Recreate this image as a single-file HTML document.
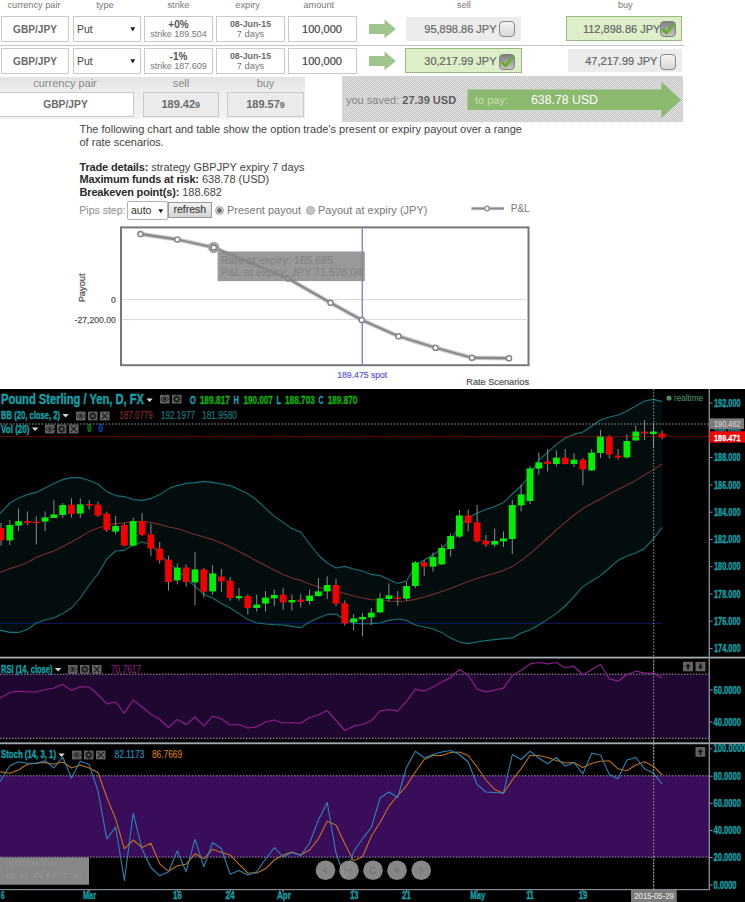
<!DOCTYPE html>
<html><head><meta charset="utf-8"><title>FX options</title>
<style>
html,body{margin:0;padding:0;background:#fff;}
body{width:745px;height:902px;overflow:hidden;position:relative;font-family:"Liberation Sans",Arial,sans-serif;color:#333;}
.a{position:absolute;white-space:nowrap;}
.c{position:absolute;white-space:nowrap;text-align:center;}
.hl{font-size:9.2px;color:#777;top:0.3px;line-height:11px;}
.bx{position:absolute;box-sizing:border-box;border:1px solid #c9c9c9;background:#fff;}
.t11{font-size:11px;color:#555;}
.gbox{position:absolute;background:#ececec;}
.grbox{position:absolute;box-sizing:border-box;background:#dcefc9;border:1px solid #9aba84;}
.amt{position:absolute;font-size:11px;color:#666;-webkit-text-stroke:0.2px #666;white-space:nowrap;text-align:right;}
.cb{position:absolute;box-sizing:border-box;width:16px;height:16px;border:1px solid #8a8a8a;border-radius:4px;background:linear-gradient(#f4f4f4,#d8d8d8);}
.cb.on{background:linear-gradient(#7e7e7e,#c4c4c4);border-color:#808080;}
.p{position:absolute;left:79.5px;font-size:11px;line-height:13px;color:#444;white-space:nowrap;}
.p b{color:#2a2a2a;letter-spacing:-0.16px;}
</style></head>
<body>
<div class="c hl" style="left:-6px;width:80px">currency pair</div>
<div class="c hl" style="left:65px;width:80px">type</div>
<div class="c hl" style="left:138.5px;width:80px">strike</div>
<div class="c hl" style="left:207.6px;width:80px">expiry</div>
<div class="c hl" style="left:278.75px;width:80px">amount</div>
<div class="c hl" style="left:424px;width:80px">sell</div>
<div class="c hl" style="left:585.3px;width:80px">buy</div>
<div class="bx" style="left:1px;top:16px;width:68px;height:26px"></div>
<div class="c" style="left:1px;width:68px;top:22.75px;font-size:10.1px;font-weight:bold;line-height:13px;color:#6a6a6a">GBP/JPY</div>
<div class="bx" style="left:72.5px;top:16px;width:68.5px;height:26px"></div>
<div class="a" style="left:77px;top:22.75px;font-size:10.5px;line-height:13px;color:#444">Put</div>
<svg class="a" style="left:129.5px;top:26.5px" width="6" height="5"><path d="M0.3 0.3H5.2L2.75 4.4Z" fill="#222"/></svg>
<div class="bx" style="left:144px;top:16px;width:68.5px;height:26px"></div>
<div class="c" style="left:144.5px;width:68px;top:18.5px;font-size:10px;line-height:11px;color:#555;font-weight:bold">+0%</div>
<div class="c" style="left:144.5px;width:68px;top:29px;font-size:9px;line-height:11px;color:#777">strike 189.504</div>
<div class="bx" style="left:216px;top:16px;width:69px;height:26px"></div>
<div class="c" style="left:216px;width:69px;top:18.5px;font-size:8.8px;font-weight:bold;line-height:11px;color:#6a6a6a">08-Jun-15</div>
<div class="c" style="left:216px;width:69px;top:29px;font-size:9.3px;line-height:11px;color:#777">7 days</div>
<div class="bx" style="left:287.5px;top:16px;width:69px;height:26px"></div>
<div class="c" style="left:287.5px;width:69px;top:23px;font-size:11px;line-height:13px;color:#444;-webkit-text-stroke:0.2px #444">100,000</div>
<svg class="a" style="left:368px;top:16px" width="30" height="26"><path d="M1 8.1 H16.5 V3.6 L27.8 13 L16.5 22.3 V17.9 H1 Z" fill="#a0c48e"/></svg>
<div class="gbox" style="left:406.25px;top:17px;width:115px;height:23.75px"></div>
<div class="amt" style="left:396px;width:100.5px;top:22.5px;line-height:13px">95,898.86 JPY</div>
<div class="cb" style="left:499px;top:21.25px"></div>
<div class="grbox" style="left:566.3px;top:16.3px;width:116px;height:25px"></div>
<div class="amt" style="left:560px;width:100.4px;top:22.5px;line-height:13px">112,898.86 JPY</div>
<div class="cb on" style="left:660px;top:21.25px"></div>
<svg class="a" style="left:660px;top:21.25px" width="16" height="16"><path d="M3.2 8.6 L6.6 12 L13 3.8" fill="none" stroke="#63b01e" stroke-width="2.6" stroke-linecap="round" stroke-linejoin="round"/></svg>
<div class="a" style="left:0;top:45px;width:683.5px;height:1px;background:#c4c4c4"></div>
<div class="bx" style="left:1px;top:48.4px;width:68px;height:26px"></div>
<div class="c" style="left:1px;width:68px;top:55.15px;font-size:10.1px;font-weight:bold;line-height:13px;color:#6a6a6a">GBP/JPY</div>
<div class="bx" style="left:72.5px;top:48.4px;width:68.5px;height:26px"></div>
<div class="a" style="left:77px;top:55.15px;font-size:10.5px;line-height:13px;color:#444">Put</div>
<svg class="a" style="left:129.5px;top:58.9px" width="6" height="5"><path d="M0.3 0.3H5.2L2.75 4.4Z" fill="#222"/></svg>
<div class="bx" style="left:144px;top:48.4px;width:68.5px;height:26px"></div>
<div class="c" style="left:144.5px;width:68px;top:50.9px;font-size:10px;line-height:11px;color:#555;font-weight:bold">-1%</div>
<div class="c" style="left:144.5px;width:68px;top:61.4px;font-size:9px;line-height:11px;color:#777">strike 187.609</div>
<div class="bx" style="left:216px;top:48.4px;width:69px;height:26px"></div>
<div class="c" style="left:216px;width:69px;top:50.9px;font-size:8.8px;font-weight:bold;line-height:11px;color:#6a6a6a">08-Jun-15</div>
<div class="c" style="left:216px;width:69px;top:61.4px;font-size:9.3px;line-height:11px;color:#777">7 days</div>
<div class="bx" style="left:287.5px;top:48.4px;width:69px;height:26px"></div>
<div class="c" style="left:287.5px;width:69px;top:55.4px;font-size:11px;line-height:13px;color:#444;-webkit-text-stroke:0.2px #444">100,000</div>
<svg class="a" style="left:368px;top:48.4px" width="30" height="26"><path d="M1 8.1 H16.5 V3.6 L27.8 13 L16.5 22.3 V17.9 H1 Z" fill="#a0c48e"/></svg>
<div class="grbox" style="left:405.25px;top:48.15px;width:116.75px;height:25px"></div>
<div class="amt" style="left:396px;width:100.5px;top:54.9px;line-height:13px">30,217.99 JPY</div>
<div class="cb on" style="left:499px;top:53.65px"></div>
<svg class="a" style="left:499px;top:53.65px" width="16" height="16"><path d="M3.2 8.6 L6.6 12 L13 3.8" fill="none" stroke="#63b01e" stroke-width="2.6" stroke-linecap="round" stroke-linejoin="round"/></svg>
<div class="gbox" style="left:567.5px;top:48.8px;width:114px;height:23.4px"></div>
<div class="amt" style="left:557px;width:100.4px;top:54.9px;line-height:13px">47,217.99 JPY</div>
<div class="cb" style="left:659.5px;top:53.65px"></div>
<div class="a" style="left:0;top:77px;width:305px;height:42px;background:linear-gradient(#e4e4e4,#eeeeee 40%,#f2f2f2)"></div>
<div class="c" style="left:15px;width:100px;top:77.2px;font-size:11px;line-height:13px;color:#888">currency pair</div>
<div class="c" style="left:131px;width:100px;top:77.2px;font-size:11px;line-height:13px;color:#888">sell</div>
<div class="c" style="left:215.5px;width:100px;top:77.2px;font-size:11px;line-height:13px;color:#888">buy</div>
<div class="bx" style="left:-1px;top:91.5px;width:135px;height:25px"></div>
<div class="c" style="left:0;width:131px;top:97.5px;font-size:10.3px;font-weight:bold;line-height:13px;color:#6a6a6a">GBP/JPY</div>
<div class="bx" style="left:143px;top:91.5px;width:75.5px;height:25px;background:#ebebeb"></div>
<div class="c" style="left:143px;width:75.5px;top:97.5px;font-size:11px;font-weight:bold;line-height:13px;color:#6a6a6a">189.42<span style="font-size:9px">9</span></div>
<div class="bx" style="left:227px;top:91.5px;width:77px;height:25px;background:#ebebeb"></div>
<div class="c" style="left:227px;width:77px;top:97.5px;font-size:11px;font-weight:bold;line-height:13px;color:#6a6a6a">189.57<span style="font-size:9px">9</span></div>
<div class="a" style="left:342px;top:76px;width:341px;height:45.5px;background:repeating-conic-gradient(#c8c8c8 0 25%,#e0e0e0 0 50%) 0 0/2px 2px"></div>
<div class="a" style="left:346px;top:93.5px;font-size:11px;line-height:13px;color:#858585">you saved: <b style="color:#5e5e5e">27.39 USD</b></div>
<svg class="a" style="left:460px;top:78px" width="225" height="44"><path d="M7.5 11.5 H201.4 V3.6 L221 22 L201.4 40 V32 H7.5 Z" fill="#8db96f"/></svg>
<div class="a" style="left:475px;top:93.5px;font-size:11px;line-height:13px;color:#c4e0ad">to pay:</div>
<div class="a" style="left:531px;top:92.5px;font-size:12.3px;line-height:14px;color:#fff">638.78 USD</div>
<div class="p" style="top:122.5px">The following chart and table show the option trade's present or expiry payout over a range</div>
<div class="p" style="top:135.5px">of rate scenarios.</div>
<div class="p" style="top:161px"><b>Trade details:</b> strategy GBPJPY expiry 7 days</div>
<div class="p" style="top:173.3px"><b>Maximum funds at risk:</b> 638.78 (USD)</div>
<div class="p" style="top:186px"><b>Breakeven point(s):</b> 188.682</div>
<div class="a" style="left:79.3px;top:204px;font-size:10.5px;line-height:13px;color:#8a8a8a">Pips step:</div>
<div class="bx" style="left:126.5px;top:200.5px;width:41.3px;height:19px;border-color:#b4b4b4;border-radius:2px;box-shadow:0 0 1px #ccc"></div>
<div class="a" style="left:131px;top:204px;font-size:10.5px;line-height:13px;color:#333">auto</div>
<svg class="a" style="left:157.5px;top:208.5px" width="6" height="5"><path d="M0.3 0.3H5.2L2.75 4.2Z" fill="#222"/></svg>
<div class="bx" style="left:168px;top:202.25px;width:43.5px;height:15.5px;border-color:#999;background:linear-gradient(#f2f2f2,#d4d4d4)"></div>
<div class="c" style="left:168px;width:43.5px;top:202.5px;font-size:10.5px;line-height:13px;color:#444;-webkit-text-stroke:0.2px #444">refresh</div>
<div class="a" style="left:215.3px;top:205.5px;width:9px;height:9px;box-sizing:border-box;border-radius:50%;border:1px solid #a0a0a0;background:radial-gradient(circle,#6a6a6a 0 1.9px,#d4d4d4 2.6px)"></div>
<div class="a" style="left:227px;top:204px;font-size:11px;line-height:13px;color:#777">Present payout</div>
<div class="a" style="left:306px;top:206px;width:8.75px;height:8.75px;box-sizing:border-box;border-radius:50%;border:1px solid #aaa;background:#c4c4c4"></div>
<div class="a" style="left:318px;top:204px;font-size:11px;line-height:13px;color:#777">Payout at expiry (JPY)</div>
<svg class="a" style="left:468px;top:203px" width="40" height="12"><line x1="3.5" y1="5.5" x2="36" y2="5.5" stroke="#d4d4d4" stroke-width="3.6"/><line x1="3.5" y1="5.5" x2="36" y2="5.5" stroke="#8c8c8c" stroke-width="2"/><circle cx="19" cy="5.5" r="2.3" fill="#fff" stroke="#8c8c8c" stroke-width="1.3"/></svg>
<div class="a" style="left:510.75px;top:202.5px;font-size:10px;line-height:12px;color:#777">P&amp;L</div>
<svg class="a" style="left:0;top:220px" width="745" height="169" viewBox="0 220 745 169" font-family="Liberation Sans,Arial,sans-serif">
<rect x="121" y="227.4" width="407.5" height="137.8" fill="#fff" stroke="#777" stroke-width="2"/>
<line x1="122" y1="299.5" x2="527.5" y2="299.5" stroke="#d9d9d9" stroke-width="1"/>
<line x1="122" y1="319.5" x2="527.5" y2="319.5" stroke="#d9d9d9" stroke-width="1"/>
<line x1="362.25" y1="228.4" x2="362.25" y2="364.2" stroke="#6a6af0" stroke-width="1.2"/>
<polyline points="140.5,234 177.3,239.5 213.75,247.5 288,278.5 330.5,302.75 361.75,320 398.5,336.25 435.5,347.75 472,357.75 509,358.25" fill="none" stroke="#cfcfcf" stroke-width="4.6" stroke-linejoin="round"/>
<polyline points="140.5,234 177.3,239.5 213.75,247.5 288,278.5 330.5,302.75 361.75,320 398.5,336.25 435.5,347.75 472,357.75 509,358.25" fill="none" stroke="#8a8a8a" stroke-width="2.3" stroke-linejoin="round"/>
<circle cx="213.75" cy="247.5" r="5.7" fill="#9c9c9c" opacity="0.9"/>
<circle cx="140.5" cy="234" r="2.6" fill="#fff" stroke="#858585" stroke-width="1.5"/>
<circle cx="177.3" cy="239.5" r="2.6" fill="#fff" stroke="#858585" stroke-width="1.5"/>
<circle cx="213.75" cy="247.5" r="2.6" fill="#fff" stroke="#858585" stroke-width="1.5"/>
<circle cx="288" cy="278.5" r="2.6" fill="#fff" stroke="#858585" stroke-width="1.5"/>
<circle cx="330.5" cy="302.75" r="2.6" fill="#fff" stroke="#858585" stroke-width="1.5"/>
<circle cx="361.75" cy="320" r="2.6" fill="#fff" stroke="#858585" stroke-width="1.5"/>
<circle cx="398.5" cy="336.25" r="2.6" fill="#fff" stroke="#858585" stroke-width="1.5"/>
<circle cx="435.5" cy="347.75" r="2.6" fill="#fff" stroke="#858585" stroke-width="1.5"/>
<circle cx="472" cy="357.75" r="2.6" fill="#fff" stroke="#858585" stroke-width="1.5"/>
<circle cx="509" cy="358.25" r="2.6" fill="#fff" stroke="#858585" stroke-width="1.5"/>
<rect x="217.6" y="251.5" width="147.2" height="29.6" fill="#888888" opacity="0.86"/>
<text x="220.75" y="264" font-size="10.9" fill="#838383">Rate at expiry: 185.685</text>
<text x="220.75" y="276.3" font-size="10.9" fill="#838383">P&amp;L at expiry: JPY 71,528.04</text>
<text x="111" y="302.7" font-size="9.5" fill="#555" stroke="#555" stroke-width="0.25" textLength="4.9" lengthAdjust="spacingAndGlyphs">0</text>
<text x="74.6" y="322.8" font-size="9.5" fill="#555" stroke="#555" stroke-width="0.25" textLength="41.2" lengthAdjust="spacingAndGlyphs">-27,200.00</text>
<text transform="translate(84.8,302.3) rotate(-90)" font-size="9.6" fill="#555" stroke="#555" stroke-width="0.25" textLength="28.8" lengthAdjust="spacingAndGlyphs">Payout</text>
<text x="337.25" y="377.9" font-size="9.4" fill="#5a5ae0" stroke="#5a5ae0" stroke-width="0.2" textLength="50" lengthAdjust="spacingAndGlyphs">189.475 spot</text>
<text x="466.25" y="385.4" font-size="9.6" fill="#555" stroke="#555" stroke-width="0.2" textLength="62.75" lengthAdjust="spacingAndGlyphs">Rate Scenarios</text>
</svg>
<svg class="a" style="left:0;top:389px" width="745" height="513" viewBox="0 389 745 513" font-family="Liberation Sans,Arial,sans-serif">
<rect x="0" y="389" width="745" height="513" fill="#000"/>
<polygon points="-2.0,515.4 1.0,512.4 9.8,503.0 18.6,498.0 27.4,494.4 36.3,492.4 45.1,488.0 53.9,483.6 62.7,479.6 71.5,477.6 80.3,477.6 89.2,480.4 98.0,484.0 106.8,491.6 115.6,495.6 124.4,496.6 133.2,499.6 142.1,500.4 150.9,498.4 159.7,494.6 168.5,488.6 177.3,485.6 186.1,483.4 195.0,482.6 203.8,481.4 212.6,482.4 221.4,484.0 230.2,485.6 239.0,489.6 247.8,493.6 256.7,500.0 265.5,508.4 274.3,516.4 283.1,522.4 291.9,528.6 300.7,532.0 309.6,544.0 318.4,555.0 327.2,563.0 336.0,568.0 344.8,566.4 353.6,569.0 362.5,571.0 371.3,574.4 380.1,575.6 388.9,579.6 397.7,583.4 406.5,581.0 415.4,565.6 424.2,560.0 433.0,555.0 441.8,548.4 450.6,540.0 459.4,526.0 468.2,518.0 477.1,513.0 485.9,509.6 494.7,506.4 503.5,502.4 512.3,494.0 521.1,486.0 530.0,475.0 538.8,460.0 547.6,452.4 556.4,444.4 565.2,438.0 574.0,434.4 582.9,432.0 591.7,426.0 600.5,420.0 609.3,417.0 618.1,415.0 626.9,411.0 635.8,406.0 644.6,401.0 653.4,399.4 662.2,401.6 662.2,527.4 653.4,539.0 644.6,548.4 635.8,553.0 626.9,556.0 618.1,560.4 609.3,568.0 600.5,575.6 591.7,581.0 582.9,586.6 574.0,596.6 565.2,606.0 556.4,613.4 547.6,619.4 538.8,625.0 530.0,630.0 521.1,633.0 512.3,637.9 503.5,638.6 494.7,639.6 485.9,640.6 477.1,642.0 468.2,643.6 459.4,642.0 450.6,638.0 441.8,632.4 433.0,629.0 424.2,627.0 415.4,625.0 406.5,620.4 397.7,619.0 388.9,620.4 380.1,623.0 371.3,623.6 362.5,624.0 353.6,623.0 344.8,620.0 336.0,614.0 327.2,614.4 318.4,618.0 309.6,622.0 300.7,627.6 291.9,626.4 283.1,625.0 274.3,624.6 265.5,624.0 256.7,623.0 247.8,619.6 239.0,613.6 230.2,608.0 221.4,603.6 212.6,598.0 203.8,594.4 195.0,586.4 186.1,578.4 177.3,570.0 168.5,562.6 159.7,554.0 150.9,544.4 142.1,542.0 133.2,545.0 124.4,550.4 115.6,551.0 106.8,559.0 98.0,574.0 89.2,585.0 80.3,598.0 71.5,608.0 62.7,613.6 53.9,618.0 45.1,620.0 36.3,623.0 27.4,629.6 18.6,632.4 9.8,632.4 1.0,630.4 -2.0,629.9" fill="#030d0e"/>
<line x1="0" y1="623.3" x2="662" y2="623.3" stroke="#0e1652" stroke-width="1.2"/>
<polyline points="-2,515.4 1.0,512.4 9.8,503.0 18.6,498.0 27.4,494.4 36.3,492.4 45.1,488.0 53.9,483.6 62.7,479.6 71.5,477.6 80.3,477.6 89.2,480.4 98.0,484.0 106.8,491.6 115.6,495.6 124.4,496.6 133.2,499.6 142.1,500.4 150.9,498.4 159.7,494.6 168.5,488.6 177.3,485.6 186.1,483.4 195.0,482.6 203.8,481.4 212.6,482.4 221.4,484.0 230.2,485.6 239.0,489.6 247.8,493.6 256.7,500.0 265.5,508.4 274.3,516.4 283.1,522.4 291.9,528.6 300.7,532.0 309.6,544.0 318.4,555.0 327.2,563.0 336.0,568.0 344.8,566.4 353.6,569.0 362.5,571.0 371.3,574.4 380.1,575.6 388.9,579.6 397.7,583.4 406.5,581.0 415.4,565.6 424.2,560.0 433.0,555.0 441.8,548.4 450.6,540.0 459.4,526.0 468.2,518.0 477.1,513.0 485.9,509.6 494.7,506.4 503.5,502.4 512.3,494.0 521.1,486.0 530.0,475.0 538.8,460.0 547.6,452.4 556.4,444.4 565.2,438.0 574.0,434.4 582.9,432.0 591.7,426.0 600.5,420.0 609.3,417.0 618.1,415.0 626.9,411.0 635.8,406.0 644.6,401.0 653.4,399.4 662.2,401.6" fill="none" stroke="#15727a" stroke-width="1.1" stroke-linejoin="round"/>
<polyline points="-2,629.9 1.0,630.4 9.8,632.4 18.6,632.4 27.4,629.6 36.3,623.0 45.1,620.0 53.9,618.0 62.7,613.6 71.5,608.0 80.3,598.0 89.2,585.0 98.0,574.0 106.8,559.0 115.6,551.0 124.4,550.4 133.2,545.0 142.1,542.0 150.9,544.4 159.7,554.0 168.5,562.6 177.3,570.0 186.1,578.4 195.0,586.4 203.8,594.4 212.6,598.0 221.4,603.6 230.2,608.0 239.0,613.6 247.8,619.6 256.7,623.0 265.5,624.0 274.3,624.6 283.1,625.0 291.9,626.4 300.7,627.6 309.6,622.0 318.4,618.0 327.2,614.4 336.0,614.0 344.8,620.0 353.6,623.0 362.5,624.0 371.3,623.6 380.1,623.0 388.9,620.4 397.7,619.0 406.5,620.4 415.4,625.0 424.2,627.0 433.0,629.0 441.8,632.4 450.6,638.0 459.4,642.0 468.2,643.6 477.1,642.0 485.9,640.6 494.7,639.6 503.5,638.6 512.3,637.9 521.1,633.0 530.0,630.0 538.8,625.0 547.6,619.4 556.4,613.4 565.2,606.0 574.0,596.6 582.9,586.6 591.7,581.0 600.5,575.6 609.3,568.0 618.1,560.4 626.9,556.0 635.8,553.0 644.6,548.4 653.4,539.0 662.2,527.4" fill="none" stroke="#15727a" stroke-width="1.1" stroke-linejoin="round"/>
<polyline points="-2,573.0 1.0,572.0 9.8,568.6 18.6,566.0 27.4,562.4 36.3,557.6 45.1,554.0 53.9,551.0 62.7,546.4 71.5,542.0 80.3,537.0 89.2,531.6 98.0,528.0 106.8,525.6 115.6,523.6 124.4,523.0 133.2,521.6 142.1,521.6 150.9,522.4 159.7,524.4 168.5,527.0 177.3,528.6 186.1,531.6 195.0,534.4 203.8,537.0 212.6,539.6 221.4,543.0 230.2,547.0 239.0,551.6 247.8,556.0 256.7,561.0 265.5,565.6 274.3,570.0 283.1,574.4 291.9,578.0 300.7,580.4 309.6,584.0 318.4,587.0 327.2,589.4 336.0,591.0 344.8,593.6 353.6,596.0 362.5,598.0 371.3,599.6 380.1,600.0 388.9,601.0 397.7,601.4 406.5,601.0 415.4,599.4 424.2,597.0 433.0,594.4 441.8,591.6 450.6,588.6 459.4,585.0 468.2,581.4 477.1,578.4 485.9,575.8 494.7,573.2 503.5,570.6 512.3,566.4 521.1,560.6 530.0,553.6 538.8,546.0 547.6,538.0 556.4,530.0 565.2,522.4 574.0,515.0 582.9,508.6 591.7,503.6 600.5,499.0 609.3,494.0 618.1,489.6 626.9,485.0 635.8,480.4 644.6,475.0 653.4,469.6 662.2,464.0" fill="none" stroke="#782e2e" stroke-width="1.1" stroke-linejoin="round"/>
<line x1="1.0" y1="523.0" x2="1.0" y2="545.6" stroke="#8a8a8a" stroke-width="1"/>
<rect x="-2.4" y="528.0" width="6.8" height="12.4" fill="#f40000"/>
<line x1="9.8" y1="520.0" x2="9.8" y2="545.0" stroke="#8a8a8a" stroke-width="1"/>
<rect x="6.4" y="525.0" width="6.8" height="15.4" fill="#00f000"/>
<line x1="18.6" y1="508.4" x2="18.6" y2="531.0" stroke="#8a8a8a" stroke-width="1"/>
<rect x="15.2" y="521.2" width="6.8" height="4.4" fill="#00f000"/>
<line x1="27.4" y1="511.4" x2="27.4" y2="525.0" stroke="#8a8a8a" stroke-width="1"/>
<rect x="24.0" y="521.2" width="6.8" height="1.8" fill="#f40000"/>
<line x1="36.3" y1="516.4" x2="36.3" y2="544.4" stroke="#8a8a8a" stroke-width="1"/>
<rect x="32.9" y="521.6" width="6.8" height="1.6" fill="#f40000"/>
<line x1="45.1" y1="511.4" x2="45.1" y2="531.0" stroke="#8a8a8a" stroke-width="1"/>
<rect x="41.7" y="517.4" width="6.8" height="4.2" fill="#00f000"/>
<line x1="53.9" y1="500.0" x2="53.9" y2="518.0" stroke="#8a8a8a" stroke-width="1"/>
<rect x="50.5" y="514.4" width="6.8" height="3.6" fill="#00f000"/>
<line x1="62.7" y1="503.0" x2="62.7" y2="518.0" stroke="#8a8a8a" stroke-width="1"/>
<rect x="59.3" y="505.0" width="6.8" height="10.0" fill="#00f000"/>
<line x1="71.5" y1="498.4" x2="71.5" y2="517.6" stroke="#8a8a8a" stroke-width="1"/>
<rect x="68.1" y="504.6" width="6.8" height="9.4" fill="#f40000"/>
<line x1="80.3" y1="498.4" x2="80.3" y2="518.0" stroke="#8a8a8a" stroke-width="1"/>
<rect x="76.9" y="504.4" width="6.8" height="9.2" fill="#00f000"/>
<line x1="89.2" y1="500.0" x2="89.2" y2="509.6" stroke="#8a8a8a" stroke-width="1"/>
<rect x="85.8" y="504.0" width="6.8" height="1.6" fill="#f40000"/>
<line x1="98.0" y1="501.6" x2="98.0" y2="517.0" stroke="#8a8a8a" stroke-width="1"/>
<rect x="94.6" y="504.6" width="6.8" height="11.0" fill="#f40000"/>
<line x1="106.8" y1="511.6" x2="106.8" y2="532.0" stroke="#8a8a8a" stroke-width="1"/>
<rect x="103.4" y="513.6" width="6.8" height="16.4" fill="#f40000"/>
<line x1="115.6" y1="516.0" x2="115.6" y2="534.0" stroke="#8a8a8a" stroke-width="1"/>
<rect x="112.2" y="526.0" width="6.8" height="5.6" fill="#00f000"/>
<line x1="124.4" y1="523.0" x2="124.4" y2="546.4" stroke="#8a8a8a" stroke-width="1"/>
<rect x="121.0" y="525.0" width="6.8" height="20.6" fill="#f40000"/>
<line x1="133.2" y1="517.6" x2="133.2" y2="546.4" stroke="#8a8a8a" stroke-width="1"/>
<rect x="129.8" y="521.2" width="6.8" height="24.4" fill="#00f000"/>
<line x1="142.1" y1="513.0" x2="142.1" y2="536.0" stroke="#8a8a8a" stroke-width="1"/>
<rect x="138.7" y="521.0" width="6.8" height="14.0" fill="#f40000"/>
<line x1="150.9" y1="523.6" x2="150.9" y2="556.0" stroke="#8a8a8a" stroke-width="1"/>
<rect x="147.5" y="534.4" width="6.8" height="14.2" fill="#f40000"/>
<line x1="159.7" y1="542.0" x2="159.7" y2="563.6" stroke="#8a8a8a" stroke-width="1"/>
<rect x="156.3" y="548.4" width="6.8" height="12.0" fill="#f40000"/>
<line x1="168.5" y1="556.0" x2="168.5" y2="590.6" stroke="#8a8a8a" stroke-width="1"/>
<rect x="165.1" y="559.6" width="6.8" height="22.4" fill="#f40000"/>
<line x1="177.3" y1="563.6" x2="177.3" y2="584.4" stroke="#8a8a8a" stroke-width="1"/>
<rect x="173.9" y="567.6" width="6.8" height="12.8" fill="#00f000"/>
<line x1="186.1" y1="564.4" x2="186.1" y2="586.6" stroke="#8a8a8a" stroke-width="1"/>
<rect x="182.7" y="567.4" width="6.8" height="14.6" fill="#f40000"/>
<line x1="195.0" y1="552.0" x2="195.0" y2="605.4" stroke="#8a8a8a" stroke-width="1"/>
<rect x="191.6" y="569.4" width="6.8" height="13.0" fill="#00f000"/>
<line x1="203.8" y1="568.0" x2="203.8" y2="597.6" stroke="#8a8a8a" stroke-width="1"/>
<rect x="200.4" y="569.4" width="6.8" height="22.2" fill="#f40000"/>
<line x1="212.6" y1="565.0" x2="212.6" y2="594.6" stroke="#8a8a8a" stroke-width="1"/>
<rect x="209.2" y="573.4" width="6.8" height="18.0" fill="#00f000"/>
<line x1="221.4" y1="569.0" x2="221.4" y2="592.0" stroke="#8a8a8a" stroke-width="1"/>
<rect x="218.0" y="576.6" width="6.8" height="4.8" fill="#f40000"/>
<line x1="230.2" y1="577.0" x2="230.2" y2="600.6" stroke="#8a8a8a" stroke-width="1"/>
<rect x="226.8" y="580.6" width="6.8" height="17.4" fill="#f40000"/>
<line x1="239.0" y1="588.0" x2="239.0" y2="600.6" stroke="#8a8a8a" stroke-width="1"/>
<rect x="235.6" y="596.2" width="6.8" height="2.0" fill="#00f000"/>
<line x1="247.8" y1="594.6" x2="247.8" y2="614.4" stroke="#8a8a8a" stroke-width="1"/>
<rect x="244.4" y="596.0" width="6.8" height="12.0" fill="#f40000"/>
<line x1="256.7" y1="594.6" x2="256.7" y2="611.6" stroke="#8a8a8a" stroke-width="1"/>
<rect x="253.3" y="604.6" width="6.8" height="3.4" fill="#00f000"/>
<line x1="265.5" y1="591.0" x2="265.5" y2="611.6" stroke="#8a8a8a" stroke-width="1"/>
<rect x="262.1" y="597.6" width="6.8" height="6.0" fill="#00f000"/>
<line x1="274.3" y1="589.6" x2="274.3" y2="606.0" stroke="#8a8a8a" stroke-width="1"/>
<rect x="270.9" y="595.0" width="6.8" height="3.4" fill="#00f000"/>
<line x1="283.1" y1="588.0" x2="283.1" y2="610.0" stroke="#8a8a8a" stroke-width="1"/>
<rect x="279.7" y="594.6" width="6.8" height="7.8" fill="#f40000"/>
<line x1="291.9" y1="594.6" x2="291.9" y2="610.6" stroke="#8a8a8a" stroke-width="1"/>
<rect x="288.5" y="600.0" width="6.8" height="2.4" fill="#00f000"/>
<line x1="300.7" y1="594.0" x2="300.7" y2="607.6" stroke="#8a8a8a" stroke-width="1"/>
<rect x="297.3" y="599.6" width="6.8" height="2.4" fill="#f40000"/>
<line x1="309.6" y1="589.6" x2="309.6" y2="604.6" stroke="#8a8a8a" stroke-width="1"/>
<rect x="306.2" y="595.6" width="6.8" height="5.4" fill="#00f000"/>
<line x1="318.4" y1="578.0" x2="318.4" y2="597.0" stroke="#8a8a8a" stroke-width="1"/>
<rect x="315.0" y="591.4" width="6.8" height="4.6" fill="#00f000"/>
<line x1="327.2" y1="576.4" x2="327.2" y2="599.0" stroke="#8a8a8a" stroke-width="1"/>
<rect x="323.8" y="585.0" width="6.8" height="6.4" fill="#00f000"/>
<line x1="336.0" y1="579.0" x2="336.0" y2="606.0" stroke="#8a8a8a" stroke-width="1"/>
<rect x="332.6" y="585.0" width="6.8" height="18.6" fill="#f40000"/>
<line x1="344.8" y1="600.4" x2="344.8" y2="625.6" stroke="#8a8a8a" stroke-width="1"/>
<rect x="341.4" y="603.4" width="6.8" height="20.0" fill="#f40000"/>
<line x1="353.6" y1="614.0" x2="353.6" y2="630.6" stroke="#8a8a8a" stroke-width="1"/>
<rect x="350.2" y="618.4" width="6.8" height="4.0" fill="#00f000"/>
<line x1="362.5" y1="613.0" x2="362.5" y2="636.4" stroke="#8a8a8a" stroke-width="1"/>
<rect x="359.1" y="617.0" width="6.8" height="2.4" fill="#00f000"/>
<line x1="371.3" y1="608.0" x2="371.3" y2="625.0" stroke="#8a8a8a" stroke-width="1"/>
<rect x="367.9" y="612.6" width="6.8" height="4.8" fill="#00f000"/>
<line x1="380.1" y1="593.0" x2="380.1" y2="613.0" stroke="#8a8a8a" stroke-width="1"/>
<rect x="376.7" y="598.4" width="6.8" height="14.0" fill="#00f000"/>
<line x1="388.9" y1="583.4" x2="388.9" y2="602.0" stroke="#8a8a8a" stroke-width="1"/>
<rect x="385.5" y="595.4" width="6.8" height="3.6" fill="#00f000"/>
<line x1="397.7" y1="591.0" x2="397.7" y2="605.6" stroke="#8a8a8a" stroke-width="1"/>
<rect x="394.3" y="597.4" width="6.8" height="1.6" fill="#f40000"/>
<line x1="406.5" y1="582.0" x2="406.5" y2="601.0" stroke="#8a8a8a" stroke-width="1"/>
<rect x="403.1" y="586.0" width="6.8" height="12.6" fill="#00f000"/>
<line x1="415.4" y1="561.0" x2="415.4" y2="588.0" stroke="#8a8a8a" stroke-width="1"/>
<rect x="412.0" y="562.4" width="6.8" height="23.6" fill="#00f000"/>
<line x1="424.2" y1="560.0" x2="424.2" y2="576.0" stroke="#8a8a8a" stroke-width="1"/>
<rect x="420.8" y="562.4" width="6.8" height="4.2" fill="#f40000"/>
<line x1="433.0" y1="552.4" x2="433.0" y2="571.6" stroke="#8a8a8a" stroke-width="1"/>
<rect x="429.6" y="557.0" width="6.8" height="9.6" fill="#00f000"/>
<line x1="441.8" y1="544.6" x2="441.8" y2="565.0" stroke="#8a8a8a" stroke-width="1"/>
<rect x="438.4" y="548.0" width="6.8" height="16.4" fill="#00f000"/>
<line x1="450.6" y1="533.6" x2="450.6" y2="556.6" stroke="#8a8a8a" stroke-width="1"/>
<rect x="447.2" y="536.0" width="6.8" height="13.0" fill="#00f000"/>
<line x1="459.4" y1="510.0" x2="459.4" y2="538.0" stroke="#8a8a8a" stroke-width="1"/>
<rect x="456.0" y="515.4" width="6.8" height="21.2" fill="#00f000"/>
<line x1="468.2" y1="509.6" x2="468.2" y2="531.4" stroke="#8a8a8a" stroke-width="1"/>
<rect x="464.8" y="515.4" width="6.8" height="7.6" fill="#f40000"/>
<line x1="477.1" y1="505.0" x2="477.1" y2="542.4" stroke="#8a8a8a" stroke-width="1"/>
<rect x="473.7" y="522.4" width="6.8" height="19.0" fill="#f40000"/>
<line x1="485.9" y1="535.0" x2="485.9" y2="547.0" stroke="#8a8a8a" stroke-width="1"/>
<rect x="482.5" y="540.6" width="6.8" height="4.0" fill="#f40000"/>
<line x1="494.7" y1="528.4" x2="494.7" y2="547.0" stroke="#8a8a8a" stroke-width="1"/>
<rect x="491.3" y="541.0" width="6.8" height="3.6" fill="#00f000"/>
<line x1="503.5" y1="531.4" x2="503.5" y2="547.0" stroke="#8a8a8a" stroke-width="1"/>
<rect x="500.1" y="538.4" width="6.8" height="3.0" fill="#00f000"/>
<line x1="512.3" y1="500.0" x2="512.3" y2="554.0" stroke="#8a8a8a" stroke-width="1"/>
<rect x="508.9" y="505.0" width="6.8" height="34.0" fill="#00f000"/>
<line x1="521.1" y1="484.4" x2="521.1" y2="511.4" stroke="#8a8a8a" stroke-width="1"/>
<rect x="517.7" y="494.4" width="6.8" height="11.0" fill="#00f000"/>
<line x1="530.0" y1="466.0" x2="530.0" y2="504.0" stroke="#8a8a8a" stroke-width="1"/>
<rect x="526.6" y="468.4" width="6.8" height="32.6" fill="#00f000"/>
<line x1="538.8" y1="452.4" x2="538.8" y2="474.6" stroke="#8a8a8a" stroke-width="1"/>
<rect x="535.4" y="462.4" width="6.8" height="6.2" fill="#00f000"/>
<line x1="547.6" y1="449.0" x2="547.6" y2="471.4" stroke="#8a8a8a" stroke-width="1"/>
<rect x="544.2" y="461.4" width="6.8" height="2.6" fill="#f40000"/>
<line x1="556.4" y1="450.4" x2="556.4" y2="466.4" stroke="#8a8a8a" stroke-width="1"/>
<rect x="553.0" y="457.6" width="6.8" height="6.4" fill="#00f000"/>
<line x1="565.2" y1="449.0" x2="565.2" y2="464.4" stroke="#8a8a8a" stroke-width="1"/>
<rect x="561.8" y="457.6" width="6.8" height="6.4" fill="#f40000"/>
<line x1="574.0" y1="453.0" x2="574.0" y2="467.0" stroke="#8a8a8a" stroke-width="1"/>
<rect x="570.6" y="459.6" width="6.8" height="4.4" fill="#00f000"/>
<line x1="582.9" y1="458.0" x2="582.9" y2="485.4" stroke="#8a8a8a" stroke-width="1"/>
<rect x="579.5" y="459.6" width="6.8" height="9.8" fill="#f40000"/>
<line x1="591.7" y1="449.0" x2="591.7" y2="471.0" stroke="#8a8a8a" stroke-width="1"/>
<rect x="588.3" y="452.6" width="6.8" height="17.8" fill="#00f000"/>
<line x1="600.5" y1="430.0" x2="600.5" y2="458.0" stroke="#8a8a8a" stroke-width="1"/>
<rect x="597.1" y="436.0" width="6.8" height="17.0" fill="#00f000"/>
<line x1="609.3" y1="435.0" x2="609.3" y2="458.4" stroke="#8a8a8a" stroke-width="1"/>
<rect x="605.9" y="436.6" width="6.8" height="18.0" fill="#f40000"/>
<line x1="618.1" y1="449.0" x2="618.1" y2="459.4" stroke="#8a8a8a" stroke-width="1"/>
<rect x="614.7" y="455.6" width="6.8" height="2.0" fill="#f40000"/>
<line x1="626.9" y1="434.4" x2="626.9" y2="458.4" stroke="#8a8a8a" stroke-width="1"/>
<rect x="623.5" y="441.0" width="6.8" height="16.4" fill="#00f000"/>
<line x1="635.8" y1="425.6" x2="635.8" y2="441.0" stroke="#8a8a8a" stroke-width="1"/>
<rect x="632.4" y="431.6" width="6.8" height="8.8" fill="#00f000"/>
<line x1="644.6" y1="420.0" x2="644.6" y2="440.0" stroke="#8a8a8a" stroke-width="1"/>
<rect x="641.2" y="431.6" width="6.8" height="1.8" fill="#f40000"/>
<line x1="653.4" y1="423.0" x2="653.4" y2="447.6" stroke="#8a8a8a" stroke-width="1"/>
<rect x="650.0" y="431.6" width="6.8" height="2.4" fill="#00f000"/>
<line x1="662.2" y1="430.4" x2="662.2" y2="439.4" stroke="#8a8a8a" stroke-width="1"/>
<rect x="658.8" y="433.4" width="6.8" height="4.2" fill="#f40000"/>
<line x1="0" y1="424" x2="709" y2="424" stroke="#a6a6a6" stroke-width="0.9" stroke-dasharray="1.6,1.6"/>
<line x1="0" y1="436.6" x2="709" y2="436.6" stroke="#b80000" stroke-width="1" stroke-dasharray="1.2,1"/>
<line x1="653.7" y1="389" x2="653.7" y2="890" stroke="#a6a6a6" stroke-width="0.9" stroke-dasharray="1.6,1.6"/>
<rect x="0" y="674.2" width="709" height="64.2" fill="#1f0830"/>
<line x1="0" y1="674.2" x2="709" y2="674.2" stroke="#a99ab0" stroke-width="1" stroke-dasharray="1.5,1.5"/>
<line x1="0" y1="738.3" x2="709" y2="738.3" stroke="#a99ab0" stroke-width="1" stroke-dasharray="1.5,1.5"/>
<polyline points="-2,699.0 1.0,697.5 9.8,692.5 18.6,691.2 27.4,692.0 36.3,692.0 45.1,689.5 53.9,688.0 62.7,684.2 71.5,690.5 80.3,686.8 89.2,687.0 98.0,694.5 106.8,703.8 115.6,702.0 124.4,713.2 133.2,700.0 142.1,707.0 150.9,714.2 159.7,719.2 168.5,727.5 177.3,719.5 186.1,724.5 195.0,717.0 203.8,725.8 212.6,716.2 221.4,718.8 230.2,725.0 239.0,724.5 247.8,728.0 256.7,726.8 265.5,722.0 274.3,720.0 283.1,723.0 291.9,722.5 300.7,723.2 309.6,717.5 318.4,715.0 327.2,710.5 336.0,720.5 344.8,730.5 353.6,726.2 362.5,724.5 371.3,720.5 380.1,711.2 388.9,709.5 397.7,711.2 406.5,701.2 415.4,689.2 424.2,691.2 433.0,687.0 441.8,682.0 450.6,677.5 459.4,669.5 468.2,675.0 477.1,689.2 485.9,691.8 494.7,690.0 503.5,688.2 512.3,675.5 521.1,670.5 530.0,663.8 538.8,662.5 547.6,663.8 556.4,662.5 565.2,668.0 574.0,666.2 582.9,675.0 591.7,669.5 600.5,664.5 609.3,678.8 618.1,681.2 626.9,674.5 635.8,671.2 644.6,673.2 653.4,673.2 662.2,678.0" fill="none" stroke="#8e1d8e" stroke-width="1.2" stroke-linejoin="round"/>
<rect x="0" y="775.8" width="709" height="81.4" fill="#3a0d5a"/>
<line x1="0" y1="775.8" x2="709" y2="775.8" stroke="#a48fb4" stroke-width="1" stroke-dasharray="1.5,1.5"/>
<line x1="0" y1="857.1" x2="709" y2="857.1" stroke="#a48fb4" stroke-width="1" stroke-dasharray="1.5,1.5"/>
<polyline points="-2,772.0 1.0,772.0 9.8,773.2 18.6,770.0 27.4,764.2 36.3,763.2 45.1,762.5 53.9,764.2 62.7,762.0 71.5,768.0 80.3,765.0 89.2,768.0 98.0,772.5 106.8,797.5 115.6,818.8 124.4,848.8 133.2,840.0 142.1,847.5 150.9,843.2 159.7,863.8 168.5,871.2 177.3,865.8 186.1,864.2 195.0,853.8 203.8,858.8 212.6,849.2 221.4,852.5 230.2,855.0 239.0,864.2 247.8,873.0 256.7,873.0 265.5,868.8 274.3,860.0 283.1,855.0 291.9,852.0 300.7,855.0 309.6,850.0 318.4,838.8 327.2,821.2 336.0,825.0 344.8,843.8 353.6,860.8 362.5,856.8 371.3,836.2 380.1,822.5 388.9,806.2 397.7,795.5 406.5,785.8 415.4,771.8 424.2,759.5 433.0,755.5 441.8,755.5 450.6,752.5 459.4,752.0 468.2,755.5 477.1,767.0 485.9,780.0 494.7,789.5 503.5,793.2 512.3,780.0 521.1,768.8 530.0,755.5 538.8,755.5 547.6,757.5 556.4,760.5 565.2,763.0 574.0,762.5 582.9,767.5 591.7,763.2 600.5,761.2 609.3,760.8 618.1,768.8 626.9,770.8 635.8,765.0 644.6,761.8 653.4,766.2 662.2,775.0" fill="none" stroke="#cf7916" stroke-width="1.1" opacity="0.93" stroke-linejoin="round"/>
<polyline points="-2,784.0 1.0,780.0 9.8,765.8 18.6,761.8 27.4,763.2 36.3,763.2 45.1,760.8 53.9,768.0 62.7,757.0 71.5,778.0 80.3,761.2 89.2,764.5 98.0,791.2 106.8,838.8 115.6,827.0 124.4,880.5 133.2,813.2 142.1,849.2 150.9,867.5 159.7,875.8 168.5,871.8 177.3,850.8 186.1,871.8 195.0,839.2 203.8,866.8 212.6,842.5 221.4,848.8 230.2,874.2 239.0,870.5 247.8,875.0 256.7,871.8 265.5,859.2 274.3,847.5 283.1,857.0 291.9,852.5 300.7,855.5 309.6,843.0 318.4,820.0 327.2,802.5 336.0,853.0 344.8,878.2 353.6,851.8 362.5,838.8 371.3,827.5 380.1,798.0 388.9,792.0 397.7,797.5 406.5,767.5 415.4,751.2 424.2,758.0 433.0,754.5 441.8,752.0 450.6,750.5 459.4,754.5 468.2,762.0 477.1,784.5 485.9,792.0 494.7,792.5 503.5,793.2 512.3,754.5 521.1,759.5 530.0,751.2 538.8,758.0 547.6,763.8 556.4,757.5 565.2,766.2 574.0,762.5 582.9,773.8 591.7,753.2 600.5,755.0 609.3,774.5 618.1,778.8 626.9,760.0 635.8,757.5 644.6,768.8 653.4,773.2 662.2,784.2" fill="none" stroke="#2a8abe" stroke-width="1.1" opacity="0.95" stroke-linejoin="round"/>
<line x1="653.7" y1="657" x2="653.7" y2="890" stroke="#a6a6a6" stroke-width="0.9" stroke-dasharray="1.6,1.6"/>
<rect x="0" y="656.6" width="745" height="2" fill="#80868a"/>
<rect x="0" y="657.2" width="745" height="0.8" fill="#b4b9bc"/>
<rect x="0" y="742.3" width="745" height="2" fill="#80868a"/>
<rect x="0" y="742.9" width="745" height="0.8" fill="#b4b9bc"/>
<rect x="708.6" y="389" width="1.4" height="501" fill="#858b92"/>
<rect x="0" y="889" width="710" height="1.2" fill="#858b92"/>
<rect x="710" y="402.5" width="2.6" height="1" fill="#858b92"/>
<text x="714" y="406.5" font-size="10.3" font-weight="bold" fill="#0ea6ae" stroke="#0ea6ae" stroke-width="0.3" textLength="26.6" lengthAdjust="spacingAndGlyphs" text-anchor="start">192.000</text>
<rect x="710" y="457.1" width="2.6" height="1" fill="#858b92"/>
<text x="714" y="461.1" font-size="10.3" font-weight="bold" fill="#0ea6ae" stroke="#0ea6ae" stroke-width="0.3" textLength="26.6" lengthAdjust="spacingAndGlyphs" text-anchor="start">188.000</text>
<rect x="710" y="484.5" width="2.6" height="1" fill="#858b92"/>
<text x="714" y="488.5" font-size="10.3" font-weight="bold" fill="#0ea6ae" stroke="#0ea6ae" stroke-width="0.3" textLength="26.6" lengthAdjust="spacingAndGlyphs" text-anchor="start">186.000</text>
<rect x="710" y="511.70000000000005" width="2.6" height="1" fill="#858b92"/>
<text x="714" y="515.7" font-size="10.3" font-weight="bold" fill="#0ea6ae" stroke="#0ea6ae" stroke-width="0.3" textLength="26.6" lengthAdjust="spacingAndGlyphs" text-anchor="start">184.000</text>
<rect x="710" y="539.0" width="2.6" height="1" fill="#858b92"/>
<text x="714" y="543.0" font-size="10.3" font-weight="bold" fill="#0ea6ae" stroke="#0ea6ae" stroke-width="0.3" textLength="26.6" lengthAdjust="spacingAndGlyphs" text-anchor="start">182.000</text>
<rect x="710" y="566.2" width="2.6" height="1" fill="#858b92"/>
<text x="714" y="570.2" font-size="10.3" font-weight="bold" fill="#0ea6ae" stroke="#0ea6ae" stroke-width="0.3" textLength="26.6" lengthAdjust="spacingAndGlyphs" text-anchor="start">180.000</text>
<rect x="710" y="593.5" width="2.6" height="1" fill="#858b92"/>
<text x="714" y="597.5" font-size="10.3" font-weight="bold" fill="#0ea6ae" stroke="#0ea6ae" stroke-width="0.3" textLength="26.6" lengthAdjust="spacingAndGlyphs" text-anchor="start">178.000</text>
<rect x="710" y="620.7" width="2.6" height="1" fill="#858b92"/>
<text x="714" y="624.7" font-size="10.3" font-weight="bold" fill="#0ea6ae" stroke="#0ea6ae" stroke-width="0.3" textLength="26.6" lengthAdjust="spacingAndGlyphs" text-anchor="start">176.000</text>
<rect x="710" y="648.0" width="2.6" height="1" fill="#858b92"/>
<text x="714" y="652.0" font-size="10.3" font-weight="bold" fill="#0ea6ae" stroke="#0ea6ae" stroke-width="0.3" textLength="26.6" lengthAdjust="spacingAndGlyphs" text-anchor="start">174.000</text>
<rect x="710" y="689.5" width="2.6" height="1" fill="#858b92"/>
<text x="713.5" y="693.5" font-size="10.3" font-weight="bold" fill="#0ea6ae" stroke="#0ea6ae" stroke-width="0.3" textLength="27.5" lengthAdjust="spacingAndGlyphs" text-anchor="start">60.0000</text>
<rect x="710" y="721.5" width="2.6" height="1" fill="#858b92"/>
<text x="713.5" y="725.5" font-size="10.3" font-weight="bold" fill="#0ea6ae" stroke="#0ea6ae" stroke-width="0.3" textLength="27.5" lengthAdjust="spacingAndGlyphs" text-anchor="start">40.0000</text>
<rect x="710" y="748.25" width="2.6" height="1" fill="#858b92"/>
<text x="713.5" y="752.25" font-size="10.3" font-weight="bold" fill="#0ea6ae" stroke="#0ea6ae" stroke-width="0.3" textLength="32" lengthAdjust="spacingAndGlyphs" text-anchor="start">100.0000</text>
<rect x="710" y="775.75" width="2.6" height="1" fill="#858b92"/>
<text x="713.5" y="779.75" font-size="10.3" font-weight="bold" fill="#0ea6ae" stroke="#0ea6ae" stroke-width="0.3" textLength="27.5" lengthAdjust="spacingAndGlyphs" text-anchor="start">80.0000</text>
<rect x="710" y="802.75" width="2.6" height="1" fill="#858b92"/>
<text x="713.5" y="806.75" font-size="10.3" font-weight="bold" fill="#0ea6ae" stroke="#0ea6ae" stroke-width="0.3" textLength="27.5" lengthAdjust="spacingAndGlyphs" text-anchor="start">60.0000</text>
<rect x="710" y="830.0" width="2.6" height="1" fill="#858b92"/>
<text x="713.5" y="834.0" font-size="10.3" font-weight="bold" fill="#0ea6ae" stroke="#0ea6ae" stroke-width="0.3" textLength="27.5" lengthAdjust="spacingAndGlyphs" text-anchor="start">40.0000</text>
<rect x="710" y="857.0" width="2.6" height="1" fill="#858b92"/>
<text x="713.5" y="861.0" font-size="10.3" font-weight="bold" fill="#0ea6ae" stroke="#0ea6ae" stroke-width="0.3" textLength="27.5" lengthAdjust="spacingAndGlyphs" text-anchor="start">20.0000</text>
<rect x="710" y="884.5" width="2.6" height="1" fill="#858b92"/>
<text x="713.5" y="888.5" font-size="10.3" font-weight="bold" fill="#0ea6ae" stroke="#0ea6ae" stroke-width="0.3" textLength="23" lengthAdjust="spacingAndGlyphs" text-anchor="start">0.0000</text>
<text x="714" y="433.7" font-size="9.6" font-weight="bold" fill="#0ea6ae" stroke="#0ea6ae" stroke-width="0.3" textLength="26.6" lengthAdjust="spacingAndGlyphs" text-anchor="start">190.000</text>
<rect x="709.5" y="418.4" width="34.5" height="10.6" fill="#7c7c7c"/>
<text x="714" y="427.4" font-size="9.8" font-weight="normal" fill="#cfcfcf" stroke="#cfcfcf" stroke-width="0.15" textLength="26.6" lengthAdjust="spacingAndGlyphs" text-anchor="start">190.462</text>
<rect x="709.5" y="431.3" width="35.5" height="11.3" fill="#f40000"/>
<text x="714" y="440.9" font-size="9.6" font-weight="bold" fill="#ffffff" stroke="#ffffff" stroke-width="0.3" textLength="26.6" lengthAdjust="spacingAndGlyphs" text-anchor="start">189.471</text>
<circle cx="669" cy="398" r="2.6" fill="#4e8a66"/>
<text x="674" y="401" font-size="9.5" font-weight="normal" fill="#4e8a66" stroke="#4e8a66" stroke-width="0.15" textLength="29" lengthAdjust="spacingAndGlyphs" text-anchor="start">realtime</text>
<text x="1" y="404.2" font-size="14" font-weight="bold" fill="#0ea6ae" stroke="#0ea6ae" stroke-width="0.3" textLength="143" lengthAdjust="spacingAndGlyphs" text-anchor="start">Pound Sterling / Yen, D, FX</text>
<path d="M146.4 398.5h6.4l-3.2 3.6z" fill="#d6d6d6"/>
<rect x="160" y="394.8" width="9.5" height="8.8" fill="#626262"/>
<path d="M160.85 399.2Q164.75 394.59999999999997 168.65 399.2Q164.75 403.8 160.85 399.2Z" fill="none" stroke="#1e1e1e" stroke-width="0.9"/><circle cx="164.75" cy="399.2" r="1.35" fill="#1e1e1e"/>
<rect x="172" y="394.8" width="9.5" height="8.8" fill="#626262"/>
<circle cx="176.75" cy="399.2" r="2.2" fill="none" stroke="#1e1e1e" stroke-width="1.5"/>
<path d="M176.75 395.3V403.09999999999997M172.85 399.2H180.65M174.05 396.5L179.45 401.9M179.45 396.5L174.05 401.9" stroke="#1e1e1e" stroke-width="1.2"/>
<circle cx="176.75" cy="399.2" r="1.3" fill="#626262"/>
<text x="189.75" y="404.3" font-size="11" font-weight="bold" fill="#14a4b8" stroke="#14a4b8" stroke-width="0.3" textLength="6.2" lengthAdjust="spacingAndGlyphs" text-anchor="start">O</text>
<text x="199.75" y="404.3" font-size="11" font-weight="bold" fill="#06b806" stroke="#06b806" stroke-width="0.3" textLength="30" lengthAdjust="spacingAndGlyphs" text-anchor="start">189.817</text>
<text x="233.5" y="404.3" font-size="11" font-weight="bold" fill="#14a4b8" stroke="#14a4b8" stroke-width="0.3" textLength="5.5" lengthAdjust="spacingAndGlyphs" text-anchor="start">H</text>
<text x="243.5" y="404.3" font-size="11" font-weight="bold" fill="#06b806" stroke="#06b806" stroke-width="0.3" textLength="29.3" lengthAdjust="spacingAndGlyphs" text-anchor="start">190.007</text>
<text x="276.5" y="404.3" font-size="11" font-weight="bold" fill="#14a4b8" stroke="#14a4b8" stroke-width="0.3" textLength="4.5" lengthAdjust="spacingAndGlyphs" text-anchor="start">L</text>
<text x="285" y="404.3" font-size="11" font-weight="bold" fill="#06b806" stroke="#06b806" stroke-width="0.3" textLength="29.8" lengthAdjust="spacingAndGlyphs" text-anchor="start">188.703</text>
<text x="318.5" y="404.3" font-size="11" font-weight="bold" fill="#14a4b8" stroke="#14a4b8" stroke-width="0.3" textLength="5" lengthAdjust="spacingAndGlyphs" text-anchor="start">C</text>
<text x="327.75" y="404.3" font-size="11" font-weight="bold" fill="#06b806" stroke="#06b806" stroke-width="0.3" textLength="29.5" lengthAdjust="spacingAndGlyphs" text-anchor="start">189.870</text>
<text x="1" y="419" font-size="10.2" font-weight="bold" fill="#0ea6ae" stroke="#0ea6ae" stroke-width="0.3" textLength="59" lengthAdjust="spacingAndGlyphs" text-anchor="start">BB (20, close, 2)</text>
<path d="M62.4 414h6.4l-3.2 3.6z" fill="#d6d6d6"/>
<rect x="76" y="411.6" width="9.5" height="8.8" fill="#626262"/>
<path d="M76.85 416.0Q80.75 411.4 84.65 416.0Q80.75 420.6 76.85 416.0Z" fill="none" stroke="#1e1e1e" stroke-width="0.9"/><circle cx="80.75" cy="416.0" r="1.35" fill="#1e1e1e"/>
<rect x="88" y="411.6" width="9.5" height="8.8" fill="#626262"/>
<circle cx="92.75" cy="416.0" r="2.2" fill="none" stroke="#1e1e1e" stroke-width="1.5"/>
<path d="M92.75 412.1V419.9M88.85 416.0H96.65M90.05 413.3L95.45 418.7M95.45 413.3L90.05 418.7" stroke="#1e1e1e" stroke-width="1.2"/>
<circle cx="92.75" cy="416.0" r="1.3" fill="#626262"/>
<rect x="100" y="411.6" width="9.5" height="8.8" fill="#626262"/>
<path d="M101.85 413.1L107.65 418.9M107.65 413.1L101.85 418.9" stroke="#1e1e1e" stroke-width="1.15"/>
<text x="119.3" y="418.5" font-size="10.6" font-weight="normal" fill="#8e2a2a" stroke="#8e2a2a" stroke-width="0.15" textLength="33.5" lengthAdjust="spacingAndGlyphs" text-anchor="start">187.0779</text>
<text x="161" y="418.5" font-size="10.6" font-weight="normal" fill="#177f88" stroke="#177f88" stroke-width="0.15" textLength="34" lengthAdjust="spacingAndGlyphs" text-anchor="start">192.1977</text>
<text x="202" y="418.5" font-size="10.6" font-weight="normal" fill="#177f88" stroke="#177f88" stroke-width="0.15" textLength="35" lengthAdjust="spacingAndGlyphs" text-anchor="start">181.9580</text>
<text x="1" y="432.6" font-size="10.2" font-weight="bold" fill="#0ea6ae" stroke="#0ea6ae" stroke-width="0.3" textLength="28.5" lengthAdjust="spacingAndGlyphs" text-anchor="start">Vol (20)</text>
<path d="M31.9 427.5h6.4l-3.2 3.6z" fill="#d6d6d6"/>
<rect x="45" y="424.6" width="9.5" height="8.8" fill="#626262"/>
<path d="M45.85 429.0Q49.75 424.4 53.65 429.0Q49.75 433.6 45.85 429.0Z" fill="none" stroke="#1e1e1e" stroke-width="0.9"/><circle cx="49.75" cy="429.0" r="1.35" fill="#1e1e1e"/>
<rect x="57" y="424.6" width="9.5" height="8.8" fill="#626262"/>
<circle cx="61.75" cy="429.0" r="2.2" fill="none" stroke="#1e1e1e" stroke-width="1.5"/>
<path d="M61.75 425.1V432.9M57.85 429.0H65.65M59.05 426.3L64.45 431.7M64.45 426.3L59.05 431.7" stroke="#1e1e1e" stroke-width="1.2"/>
<circle cx="61.75" cy="429.0" r="1.3" fill="#626262"/>
<rect x="69" y="424.6" width="9.5" height="8.8" fill="#626262"/>
<path d="M70.85 426.1L76.65 431.9M76.65 426.1L70.85 431.9" stroke="#1e1e1e" stroke-width="1.15"/>
<text x="87.3" y="431.8" font-size="10" font-weight="bold" fill="#0a8a0a" stroke="#0a8a0a" stroke-width="0.3" textLength="4.2" lengthAdjust="spacingAndGlyphs" text-anchor="start">0</text>
<text x="98.8" y="431.8" font-size="10" font-weight="bold" fill="#1040d0" stroke="#1040d0" stroke-width="0.3" textLength="4.2" lengthAdjust="spacingAndGlyphs" text-anchor="start">0</text>
<text x="1" y="673" font-size="10.2" font-weight="bold" fill="#0ea6ae" stroke="#0ea6ae" stroke-width="0.3" textLength="51.5" lengthAdjust="spacingAndGlyphs" text-anchor="start">RSI (14, close)</text>
<path d="M54.9 668h6.4l-3.2 3.6z" fill="#d6d6d6"/>
<rect x="68" y="665" width="9.5" height="8.8" fill="#626262"/>
<path d="M68.85 669.4Q72.75 664.8 76.65 669.4Q72.75 674.0 68.85 669.4Z" fill="none" stroke="#1e1e1e" stroke-width="0.9"/><circle cx="72.75" cy="669.4" r="1.35" fill="#1e1e1e"/>
<rect x="80" y="665" width="9.5" height="8.8" fill="#626262"/>
<circle cx="84.75" cy="669.4" r="2.2" fill="none" stroke="#1e1e1e" stroke-width="1.5"/>
<path d="M84.75 665.5V673.3M80.85 669.4H88.65M82.05 666.6999999999999L87.45 672.1M87.45 666.6999999999999L82.05 672.1" stroke="#1e1e1e" stroke-width="1.2"/>
<circle cx="84.75" cy="669.4" r="1.3" fill="#626262"/>
<rect x="92" y="665" width="9.5" height="8.8" fill="#626262"/>
<path d="M93.85 666.5L99.65 672.3M99.65 666.5L93.85 672.3" stroke="#1e1e1e" stroke-width="1.15"/>
<text x="111" y="673" font-size="10.6" font-weight="normal" fill="#8e1d8e" stroke="#8e1d8e" stroke-width="0.15" textLength="30" lengthAdjust="spacingAndGlyphs" text-anchor="start">70.7617</text>
<rect x="683" y="661.8" width="10" height="9.5" fill="#626262"/>
<path d="M688.0 663.55L690.8 666.55H688.9V669.55H687.1V666.55H685.2Z" fill="#161616"/>
<rect x="695.5" y="661.8" width="10" height="9.5" fill="#626262"/>
<path d="M700.5 669.55L703.3 666.55H701.4V663.55H699.6V666.55H697.7Z" fill="#161616"/>
<text x="1" y="758.2" font-size="10.2" font-weight="bold" fill="#0ea6ae" stroke="#0ea6ae" stroke-width="0.3" textLength="55" lengthAdjust="spacingAndGlyphs" text-anchor="start">Stoch (14, 3, 1)</text>
<path d="M58.4 753.5h6.4l-3.2 3.6z" fill="#d6d6d6"/>
<rect x="72" y="750.6" width="9.5" height="8.8" fill="#626262"/>
<path d="M72.85 755.0Q76.75 750.4 80.65 755.0Q76.75 759.6 72.85 755.0Z" fill="none" stroke="#1e1e1e" stroke-width="0.9"/><circle cx="76.75" cy="755.0" r="1.35" fill="#1e1e1e"/>
<rect x="84" y="750.6" width="9.5" height="8.8" fill="#626262"/>
<circle cx="88.75" cy="755.0" r="2.2" fill="none" stroke="#1e1e1e" stroke-width="1.5"/>
<path d="M88.75 751.1V758.9M84.85 755.0H92.65M86.05 752.3L91.45 757.7M91.45 752.3L86.05 757.7" stroke="#1e1e1e" stroke-width="1.2"/>
<circle cx="88.75" cy="755.0" r="1.3" fill="#626262"/>
<rect x="96" y="750.6" width="9.5" height="8.8" fill="#626262"/>
<path d="M97.85 752.1L103.65 757.9M103.65 752.1L97.85 757.9" stroke="#1e1e1e" stroke-width="1.15"/>
<text x="114.5" y="757.8" font-size="10.6" font-weight="normal" fill="#2a8fc4" stroke="#2a8fc4" stroke-width="0.15" textLength="30" lengthAdjust="spacingAndGlyphs" text-anchor="start">82.1173</text>
<text x="152" y="757.8" font-size="10.6" font-weight="normal" fill="#d47b14" stroke="#d47b14" stroke-width="0.15" textLength="30" lengthAdjust="spacingAndGlyphs" text-anchor="start">86.7669</text>
<rect x="695.5" y="747" width="9.8" height="9.8" fill="#626262"/>
<path d="M700.4 748.9L703.1999999999999 751.9H701.3V754.9H699.5V751.9H697.6Z" fill="#161616"/>
<rect x="0" y="857.3" width="89" height="27.4" fill="#878787"/>
<text x="5" y="865.8" font-size="9.5" font-weight="normal" fill="#929292" stroke="#929292" stroke-width="0.15" textLength="51" lengthAdjust="spacingAndGlyphs" text-anchor="start">Sponsored by</text>
<text x="5" y="877.8" font-size="8" font-weight="normal" fill="#929292" stroke="#929292" stroke-width="0.15" textLength="78" lengthAdjust="spacingAndGlyphs" text-anchor="start">E X A N T E</text>
<circle cx="325.5" cy="870.2" r="9.8" fill="#9a9a9a" opacity="0.88"/>
<path d="M327.0 867.2L324.0 870.2L327.0 873.2" fill="none" stroke="#737373" stroke-width="1.3"/>
<circle cx="349" cy="870.2" r="9.8" fill="#9a9a9a" opacity="0.88"/>
<path d="M346 870.2H352" stroke="#737373" stroke-width="1.3"/>
<circle cx="373" cy="870.2" r="9.8" fill="#9a9a9a" opacity="0.88"/>
<path d="M375.6 868.7A3 3 0 1 0 375.6 872.0" fill="none" stroke="#737373" stroke-width="1.3"/>
<circle cx="397" cy="870.2" r="9.8" fill="#9a9a9a" opacity="0.88"/>
<path d="M394 870.2H400M397 867.2V873.2" stroke="#737373" stroke-width="1.3"/>
<circle cx="421.2" cy="870.2" r="9.8" fill="#9a9a9a" opacity="0.88"/>
<path d="M419.7 867.2L422.7 870.2L419.7 873.2" fill="none" stroke="#737373" stroke-width="1.3"/>
<text x="1.0" y="898.8" font-size="10" font-weight="bold" fill="#0ea6ae" stroke="#0ea6ae" stroke-width="0.3" textLength="3.5" lengthAdjust="spacingAndGlyphs" text-anchor="start">6</text>
<text x="83.0" y="898.8" font-size="10" font-weight="bold" fill="#0ea6ae" stroke="#0ea6ae" stroke-width="0.3" textLength="13" lengthAdjust="spacingAndGlyphs" text-anchor="start">Mar</text>
<text x="173.1" y="898.8" font-size="10" font-weight="bold" fill="#0ea6ae" stroke="#0ea6ae" stroke-width="0.3" textLength="8.8" lengthAdjust="spacingAndGlyphs" text-anchor="start">16</text>
<text x="225.4" y="898.8" font-size="10" font-weight="bold" fill="#0ea6ae" stroke="#0ea6ae" stroke-width="0.3" textLength="9.2" lengthAdjust="spacingAndGlyphs" text-anchor="start">24</text>
<text x="277.0" y="898.8" font-size="10" font-weight="bold" fill="#0ea6ae" stroke="#0ea6ae" stroke-width="0.3" textLength="14" lengthAdjust="spacingAndGlyphs" text-anchor="start">Apr</text>
<text x="349.95" y="898.8" font-size="10" font-weight="bold" fill="#0ea6ae" stroke="#0ea6ae" stroke-width="0.3" textLength="8.5" lengthAdjust="spacingAndGlyphs" text-anchor="start">13</text>
<text x="402.04999999999995" y="898.8" font-size="10" font-weight="bold" fill="#0ea6ae" stroke="#0ea6ae" stroke-width="0.3" textLength="8.7" lengthAdjust="spacingAndGlyphs" text-anchor="start">21</text>
<text x="470.25" y="898.8" font-size="10" font-weight="bold" fill="#0ea6ae" stroke="#0ea6ae" stroke-width="0.3" textLength="15" lengthAdjust="spacingAndGlyphs" text-anchor="start">May</text>
<text x="526.15" y="898.8" font-size="10" font-weight="bold" fill="#0ea6ae" stroke="#0ea6ae" stroke-width="0.3" textLength="7.7" lengthAdjust="spacingAndGlyphs" text-anchor="start">11</text>
<text x="578.65" y="898.8" font-size="10" font-weight="bold" fill="#0ea6ae" stroke="#0ea6ae" stroke-width="0.3" textLength="8.7" lengthAdjust="spacingAndGlyphs" text-anchor="start">19</text>
<rect x="88.7" y="890" width="1" height="2" fill="#9a9a9a"/>
<rect x="176.8" y="890" width="1" height="2" fill="#9a9a9a"/>
<rect x="229.7" y="890" width="1" height="2" fill="#9a9a9a"/>
<rect x="282.6" y="890" width="1" height="2" fill="#9a9a9a"/>
<rect x="353.1" y="890" width="1" height="2" fill="#9a9a9a"/>
<rect x="406.0" y="890" width="1" height="2" fill="#9a9a9a"/>
<rect x="476.6" y="890" width="1" height="2" fill="#9a9a9a"/>
<rect x="529.5" y="890" width="1" height="2" fill="#9a9a9a"/>
<rect x="582.4" y="890" width="1" height="2" fill="#9a9a9a"/>
<rect x="631" y="890" width="45.8" height="12" fill="#7a7a7a"/>
<text x="634.3" y="899.3" font-size="9.6" font-weight="normal" fill="#e0e0e0" stroke="#e0e0e0" stroke-width="0.15" textLength="39.5" lengthAdjust="spacingAndGlyphs" text-anchor="start">2015-05-29</text>
</svg>
</body></html>
